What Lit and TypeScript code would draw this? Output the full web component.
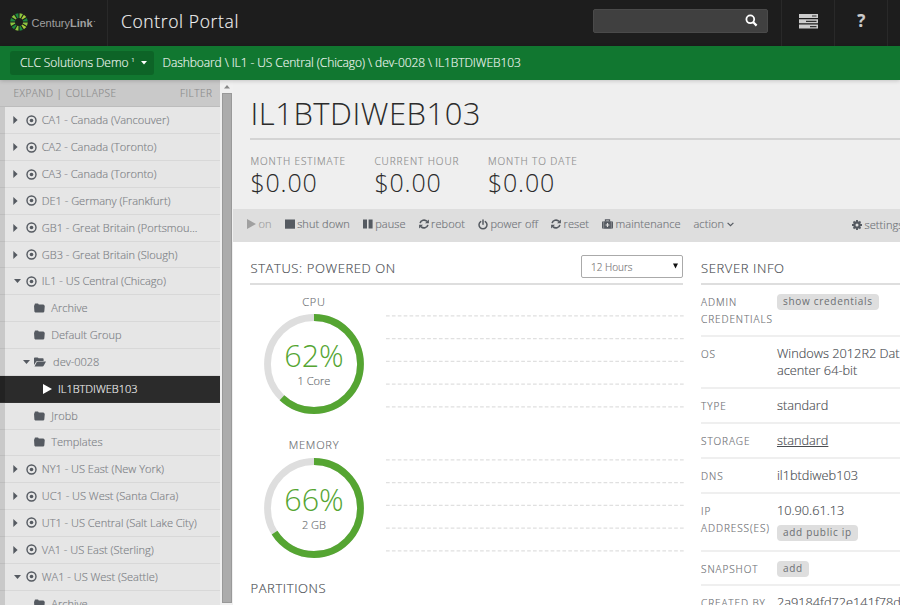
import { LitElement, html, svg, css } from "lit";
import { customElement } from "lit/decorators.js";
import { classMap } from "lit/directives/class-map.js";

type Node = { label: string; kind: "dc" | "folder" | "open" | "server"; depth: number; open?: boolean };

const nodes: Node[] = [
  { label: "CA1 - Canada (Vancouver)", kind: "dc", depth: 0 },
  { label: "CA2 - Canada (Toronto)", kind: "dc", depth: 0 },
  { label: "CA3 - Canada (Toronto)", kind: "dc", depth: 0 },
  { label: "DE1 - Germany (Frankfurt)", kind: "dc", depth: 0 },
  { label: "GB1 - Great Britain (Portsmou…", kind: "dc", depth: 0 },
  { label: "GB3 - Great Britain (Slough)", kind: "dc", depth: 0 },
  { label: "IL1 - US Central (Chicago)", kind: "dc", depth: 0, open: true },
  { label: "Archive", kind: "folder", depth: 1 },
  { label: "Default Group", kind: "folder", depth: 1 },
  { label: "dev-0028", kind: "open", depth: 1, open: true },
  { label: "IL1BTDIWEB103", kind: "server", depth: 2 },
  { label: "Jrobb", kind: "folder", depth: 1 },
  { label: "Templates", kind: "folder", depth: 1 },
  { label: "NY1 - US East (New York)", kind: "dc", depth: 0 },
  { label: "UC1 - US West (Santa Clara)", kind: "dc", depth: 0 },
  { label: "UT1 - US Central (Salt Lake City)", kind: "dc", depth: 0 },
  { label: "VA1 - US East (Sterling)", kind: "dc", depth: 0 },
  { label: "WA1 - US West (Seattle)", kind: "dc", depth: 0, open: true },
  { label: "Archive", kind: "folder", depth: 1 },
];

const right = svg`<svg width="5" height="8" viewBox="0 0 5 8"><path d="M0.3 0L4.6 4L0.3 8z" fill="currentColor"/></svg>`;
const down = svg`<svg width="7" height="4" viewBox="0 0 7 4"><path d="M0 0H7L3.5 4z" fill="currentColor"/></svg>`;
const target = svg`<svg width="11" height="11" viewBox="0 0 11 11"><circle cx="5.5" cy="5.5" r="4.5" fill="none" stroke="currentColor" stroke-width="1.4"/><circle cx="5.5" cy="5.5" r="1.8" fill="currentColor"/></svg>`;
const folder = svg`<svg width="11" height="10" viewBox="0 0 11 10"><path d="M0.6 2.3V1.5Q0.6 0.6 1.5 0.6H3.7Q4.5 0.6 4.7 1.5H9.2Q10 1.5 10.2 2.5H10.8L10.3 8.6Q10.2 9.4 9.4 9.4H1.3Q0.5 9.4 0.4 8.6L0 2.5z" fill="currentColor"/></svg>`;
const folderOpen = svg`<svg width="12" height="10" viewBox="0 0 12 10"><path d="M0 8V1.3Q0 0.4 0.9 0.4H3.5Q4.3 0.4 4.5 1.2H8.7Q9.6 1.2 9.6 2.1V4H3.4Q2.6 4 2.1 4.8zM0.5 9.4L2.8 5.1Q3.2 4.5 4 4.5H12L9.8 8.5Q9.3 9.4 8.4 9.4z" fill="currentColor"/></svg>`;
const play = svg`<svg width="9" height="10" viewBox="0 0 9 10"><path d="M0 0L9 5L0 10z" fill="currentColor"/></svg>`;
const stop = svg`<svg width="10" height="10" viewBox="0 0 10 10"><path d="M0 0.5H10V9.7H0z" fill="currentColor"/></svg>`;
const pause = svg`<svg width="10" height="10" viewBox="0 0 10 10"><path d="M0 0.5H4V9.5H0zM5.6 0.5H9.6V9.5H5.6z" fill="currentColor"/></svg>`;
const refresh = svg`<svg width="10" height="10" viewBox="0 0 10 10"><path d="M1.1 4.2A4 3.8 0 0 1 8 2.4M8.9 5.8A4 3.8 0 0 1 2 7.6" fill="none" stroke="currentColor" stroke-width="1.6"/><path d="M9.9 0.4V4.3H6zM0.1 9.6V5.7H4z" fill="currentColor"/></svg>`;
const power = svg`<svg width="10" height="11" viewBox="0 0 10 11"><path d="M2.7 2.6A4 4 0 1 0 7.3 2.6" fill="none" stroke="currentColor" stroke-width="1.5" stroke-linecap="round"/><path d="M5 0.9V5.2" stroke="currentColor" stroke-width="1.5" stroke-linecap="round"/></svg>`;
const medkit = svg`<svg width="11" height="10" viewBox="0 0 11 10"><path d="M3.5 2.4V0.9H7.5V2.4" fill="none" stroke="currentColor" stroke-width="1.3"/><path fill-rule="evenodd" d="M1.2 2.2H9.8Q11 2.2 11 3.4V8.6Q11 9.8 9.8 9.8H1.2Q0 9.8 0 8.6V3.4Q0 2.2 1.2 2.2zM4.9 4.1V5.4H3.6V6.6H4.9V7.9H6.1V6.6H7.4V5.4H6.1V4.1z" fill="currentColor"/><path d="M1.7 2.2V9.8M9.3 2.2V9.8" stroke="#dedede" stroke-width=".4"/></svg>`;
const chevron = svg`<svg width="7" height="5" viewBox="0 0 7 5"><path d="M0.6 0.8L3.5 3.7L6.4 0.8" fill="none" stroke="currentColor" stroke-width="1.2"/></svg>`;
const gear = svg`<svg width="10" height="10" viewBox="0 0 10 10"><circle cx="5" cy="5" r="2.6" fill="none" stroke="currentColor" stroke-width="2.2"/><path d="M5 0V2M5 8V10M0 5H2M8 5H10M1.5 1.5L2.9 2.9M7.1 7.1L8.5 8.5M8.5 1.5L7.1 2.9M2.9 7.1L1.5 8.5" stroke="currentColor" stroke-width="1.9"/></svg>`;

const rayColors = ["#8cc63f", "#a5cd39", "#1d8a3e", "#8cc63f", "#a5cd39", "#1d8a3e", "#8cc63f", "#1d8a3e", "#8cc63f", "#1d8a3e", "#8cc63f", "#1d8a3e"];
const rays = rayColors.map((c, i) => svg`<path d="M-0.6 -4L-1.7 -8.7H1.7L0.6 -4z" fill=${c} transform="rotate(${i * 30 + 15})"/>`);

@customElement("usage-gauge")
class UsageGauge extends LitElement {
  static properties = { name: {}, value: { type: Number }, detail: {} };
  declare name: string;
  declare value: number;
  declare detail: string;

  static styles = css`
    :host { display: flex; height: 143.6px; }
    .left { width: 127px; flex: none; text-align: center; }
    .name { height: 29.6px; line-height: 34px; font-size: 11px; letter-spacing: .8px; color: #6b6e72; }
    .ring { display: grid; width: 100px; height: 100px; margin: 0 auto 0 13.5px; }
    .ring > * { grid-area: 1 / 1; }
    .text { padding-top: 18px; }
    .pct { height: 43px; line-height: 47px; font-size: 30.5px; color: #55a532; -webkit-text-stroke: 0; }
    .sub { height: 16px; line-height: 12px; font-size: 11px; color: #6b6e72; }
    .chart { padding: 30.7px 0 0 8.5px; flex: 1; }
    .chart svg { display: block; }
  `;

  render() {
    const c = 2 * Math.PI * 46.5;
    return html`
      <div class="left">
        <div class="name">${this.name}</div>
        <div class="ring">
          <svg width="100" height="100" viewBox="0 0 100 100" fill="none" stroke-width="6.8">
            <circle cx="50" cy="50" r="46.5" stroke="#dedede" />
            <circle cx="50" cy="50" r="46.5" stroke="#55a532" transform="rotate(-90 50 50)"
              stroke-dasharray="${(c * this.value) / 100} ${c}" />
          </svg>
          <div class="text"><div class="pct">${this.value}%</div><div class="sub">${this.detail}</div></div>
        </div>
      </div>
      <div class="chart">
        <svg width="298" height="94" viewBox="0 0 298 94">
          ${[0, 1, 2, 3, 4].map((i) => svg`<path d="M0 ${0.8 + i * 22.75}H298" stroke="#e0e0e0" stroke-width="1.3" stroke-dasharray="3.7 2.18"/>`)}
        </svg>
      </div>`;
  }
}

@customElement("app-root")
class AppRoot extends LitElement {
  static styles = css`
    :host { display: block; width: 900px; height: 605px; overflow: hidden; background: #fff; font-family: "Open Sans", sans-serif; font-size: 11.5px; font-weight: 300; -webkit-text-stroke: .15px; color: #6b6e72; white-space: nowrap; }
    * { box-sizing: border-box; }
    svg { display: block; flex: none; }
    .top { height: 46px; background: #1d1d1d; display: flex; }
    .logo { width: 108px; border-right: 1px solid #292929; display: flex; align-items: center; padding-left: 9.5px; color: #a0a0a0; font: 11px "Liberation Sans", sans-serif; gap: 4px; -webkit-text-stroke: 0; }
    .logo svg { margin-top: -2px; }
    .logo span { margin-top: -1px; }
    .logo i { font-style: normal; font-size: 4px; margin: -3px 0 0 -3px; }
    .title { flex: 1; padding-left: 13px; font-size: 17.5px; line-height: 43px; color: #f2f2f2; letter-spacing: .62px; }
    .search { width: 175px; height: 24px; margin: 9px 13.5px 0 0; border-radius: 2px; background: #404040; border: 1px solid #4a4a4a; display: flex; justify-content: flex-end; padding: 4px 9px 0 0; }
    .tool { border-left: 1px solid #292929; display: flex; justify-content: center; width: 53px; color: #ccc; }
    .tool svg { margin-top: 13.5px; }
    .tool.last { width: 12.7px; }
    .help { font: bold 17px/42px "Open Sans", sans-serif; }
    .crumbs { height: 34px; background: #117730; display: flex; padding: 4.5px 0 0 10px; color: #eef6f0; font-size: 12px; position: relative; box-shadow: 0 1px 4px rgba(0,0,0,.18); }
    .account { width: 144px; height: 24px; border-radius: 3px; background: #0d6427; line-height: 23px; padding: 0 7.5px 0 10px; display: flex; align-items: center; margin-right: 8.5px; letter-spacing: -.08px; }
    .account sup { font-size: 6px; line-height: 1; margin: -6px 0 0 3px; flex: 1; }
    .account svg { color: #fff; }
    .path { line-height: 24.5px; letter-spacing: -.083px; }
    .body { display: flex; height: 525px; }
    .side { width: 220.4px; flex: none; background: linear-gradient(90deg, #c9c9c9 0 5px, #e6e6e6 5px); overflow: hidden; }
    .filter { display: flex; justify-content: space-between; height: 27.4px; background: #c9c9c9; border-bottom: 1px solid #bcbcbc; line-height: 27px; padding: 0 8px 0 13.5px; font-size: 10px; letter-spacing: .5px; color: #8c8c8c; }
    .node { display: flex; align-items: center; height: 26.85px; border-bottom: 1px solid rgba(0,0,0,.06); color: #555a61; padding-left: 13px; }
    .node .lbl { color: #7c8085; font-size: 11px; line-height: 26px; }
    .arrow { width: 12.6px; flex: none; display: flex; }
    .dc .lbl { margin-left: 5.2px; }
    .dc.open .arrow svg, .d1.open .arrow svg { margin-left: 1px; }
    .d1 { padding-left: 21.5px; }
    .folder .lbl { margin-left: 6.2px; }
    .d1.open .lbl { margin-left: 7px; }
    .server { background: linear-gradient(90deg, #222 0 5px, #2b2b2b 5px); padding-left: 30.4px; color: #fff; border-color: #333; }
    .server .lbl { color: #f4f4f4; margin-left: 6px; }
    .scroll { width: 13.1px; flex: none; background: #f0f0f0; padding-left: 1.5px; }
    .up { height: 13px; padding: 5px 0 0 2.5px; color: #888; }
    .thumb { height: 510px; width: 10px; background: #acacac; border: 1px solid #999; }
    .main { flex: 1; min-width: 0; overflow: hidden; }
    .hero { height: 129.3px; background: #efefef; padding-left: 17px; }
    h1 { margin: 0; height: 60px; border-bottom: 2px solid #d4d4d4; font-size: 31px; font-weight: 300; line-height: 67px; color: #2b2b2b; letter-spacing: .5px; -webkit-text-stroke: 0; }
    .costs { display: flex; }
    .cost { width: 124px; padding-top: 12.4px; }
    .cost + .cost { width: 113.5px; }
    .cost .k { font-size: 10px; line-height: 18px; height: 17.4px; letter-spacing: .92px; color: #8c8c8c; }
    .cost .v { font-size: 25px; line-height: 25px; color: #2b2b2b; letter-spacing: .8px; -webkit-text-stroke: 0; }
    .bar { height: 32.7px; background: #dedede; display: flex; align-items: center; padding: 0 0 4px 13.5px; color: #555a61; font-size: 11px; }
    .act { display: flex; align-items: center; gap: 2.6px; margin-right: 12.9px; color: #6e7277; letter-spacing: .06px; }
    .act svg { color: #555a61; margin-top: 1px; }
    .act.off, .act.off svg { color: #a0a0a0; }
    .act.settings { margin: 1px 0 0 105.5px; }
    .cols { display: flex; padding-left: 17px; }
    .status { width: 433px; flex: none; margin-right: 17.6px; }
    .head { display: flex; justify-content: space-between; height: 42.8px; border-bottom: 2px solid #dedede; font-size: 13px; line-height: 52px; color: #4a4d52; letter-spacing: .6px; }
    .select { width: 102px; height: 23px; margin-top: 13.3px; border: 1px solid #aaa; border-radius: 2px; font-size: 10px; line-height: 22px; letter-spacing: 0; color: #777; padding: 0 4px 0 8.5px; display: flex; justify-content: space-between; align-items: center; }
    .select svg { color: #111; margin-top: -1px; }
    .parts { font-size: 13px; line-height: 16px; padding-top: 8.5px; letter-spacing: .6px; color: #4a4d52; }
    .info { width: 230px; flex: none; }
    .row { display: flex; border-bottom: 2px solid #efefef; padding-top: 8.8px; }
    .row .k { width: 75.9px; flex: none; font-size: 10px; line-height: 17px; letter-spacing: .9px; color: #6b6e72; white-space: pre; }
    .row .val { font-size: 12.75px; line-height: 17px; margin-top: -.8px; color: #4a4d52; white-space: pre; }
    .chip { display: block; width: fit-content; height: 16px; border-radius: 4px; background: #dedede; font-size: 10px; font-weight: 400; -webkit-text-stroke: 0; line-height: 14.5px; margin-top: 1px; padding: 0 6px; letter-spacing: .7px; color: #6b6e72; }
    .chip.gap { margin-top: 6px; }
    u { text-underline-offset: 1px; }
  `;

  private node(n: Node) {
    const cls = { node: true, dc: n.kind === "dc", folder: n.kind === "folder", server: n.kind === "server", d1: n.depth === 1, open: !!n.open };
    const arrow = n.open ? down : n.kind === "dc" ? right : "";
    const icon = { dc: target, folder, open: folderOpen, server: play }[n.kind];
    return html`<div class=${classMap(cls)}><span class="arrow">${arrow}</span>${icon}<span class="lbl">${n.label}</span></div>`;
  }

  private row(h: number, k: string, v: unknown) {
    return html`<div class="row" style="height:${h}px"><div class="k">${k}</div><div class="val">${v}</div></div>`;
  }

  render() {
    return html`
      <div class="top">
        <div class="logo"><svg width="18" height="18" viewBox="-9 -9 18 18">${rays}</svg><span>Century<b>Link</b></span><i>•</i></div>
        <div class="title">Control Portal</div>
        <div class="search"><svg width="13" height="13" viewBox="0 0 13 13"><circle cx="5.3" cy="5.3" r="3.9" fill="none" stroke="#fff" stroke-width="1.8"/><path d="M8 8L11.6 11.6" stroke="#fff" stroke-width="2.2"/></svg></div>
        <div class="tool"><svg width="19" height="15" viewBox="0 0 19 15"><path d="M0 0H19V4H0zM0 5.3H19V9.3H0zM0 10.6H19V14.6H0z" fill="#ccc"/><path d="M13 2H17.5M7 7.3H17.5M11 12.6H17.5" stroke="#333" stroke-width="1.2"/></svg></div>
        <div class="tool"><span class="help">?</span></div>
        <div class="tool last"></div>
      </div>
      <div class="crumbs">
        <div class="account">CLC Solutions Demo<sup>1</sup><svg width="6" height="4" viewBox="0 0 6 4"><path d="M0 0H6L3 3.6z" fill="currentColor"/></svg></div>
        <div class="path">Dashboard \\ IL1 - US Central (Chicago) \\ dev-0028 \\ IL1BTDIWEB103</div>
      </div>
      <div class="body">
        <div class="side">
          <div class="filter"><span>EXPAND | COLLAPSE</span><span>FILTER</span></div>
          ${nodes.map((n) => this.node(n))}
        </div>
        <div class="scroll">
          <div class="up"><svg width="6" height="4" viewBox="0 0 6 4"><path d="M0 3.6H6L3 0z" fill="currentColor"/></svg></div>
          <div class="thumb"></div>
        </div>
        <div class="main">
          <div class="hero">
            <h1>IL1BTDIWEB103</h1>
            <div class="costs">
              ${["MONTH ESTIMATE", "CURRENT HOUR", "MONTH TO DATE"].map((k) => html`<div class="cost"><div class="k">${k}</div><div class="v">$0.00</div></div>`)}
            </div>
          </div>
          <div class="bar">
            <span class="act off">${play}on</span>
            <span class="act">${stop}shut down</span>
            <span class="act">${pause}pause</span>
            <span class="act">${refresh}reboot</span>
            <span class="act">${power}power off</span>
            <span class="act">${refresh}reset</span>
            <span class="act">${medkit}maintenance</span>
            <span class="act">action${chevron}</span>
            <span class="act settings">${gear}settings</span>
          </div>
          <div class="cols">
            <div class="status">
              <div class="head">STATUS: POWERED ON
                <div class="select">12 Hours<svg width="5" height="6" viewBox="0 0 5 6"><path d="M0 0.5H5L2.5 5.5z" fill="currentColor"/></svg></div>
              </div>
              <usage-gauge name="CPU" value="62" detail="1 Core"></usage-gauge>
              <usage-gauge name="MEMORY" value="66" detail="2 GB"></usage-gauge>
              <div class="parts">PARTITIONS</div>
            </div>
            <div class="info">
              <div class="head">SERVER INFO</div>
              ${this.row(52, "ADMIN\nCREDENTIALS", html`<span class="chip">show credentials</span>`)}
              ${this.row(52, "OS", "Windows 2012R2 Dat\nacenter 64-bit")}
              ${this.row(35.2, "TYPE", "standard")}
              ${this.row(35.2, "STORAGE", html`<u>standard</u>`)}
              ${this.row(35.2, "DNS", "il1btdiweb103")}
              ${this.row(57.8, "IP\nADDRESS(ES)", html`10.90.61.13<span class="chip gap">add public ip</span>`)}
              ${this.row(34, "SNAPSHOT", html`<span class="chip">add</span>`)}
              ${this.row(35, "CREATED BY", "2a9184fd72e141f78d")}
            </div>
          </div>
        </div>
      </div>`;
  }
}
